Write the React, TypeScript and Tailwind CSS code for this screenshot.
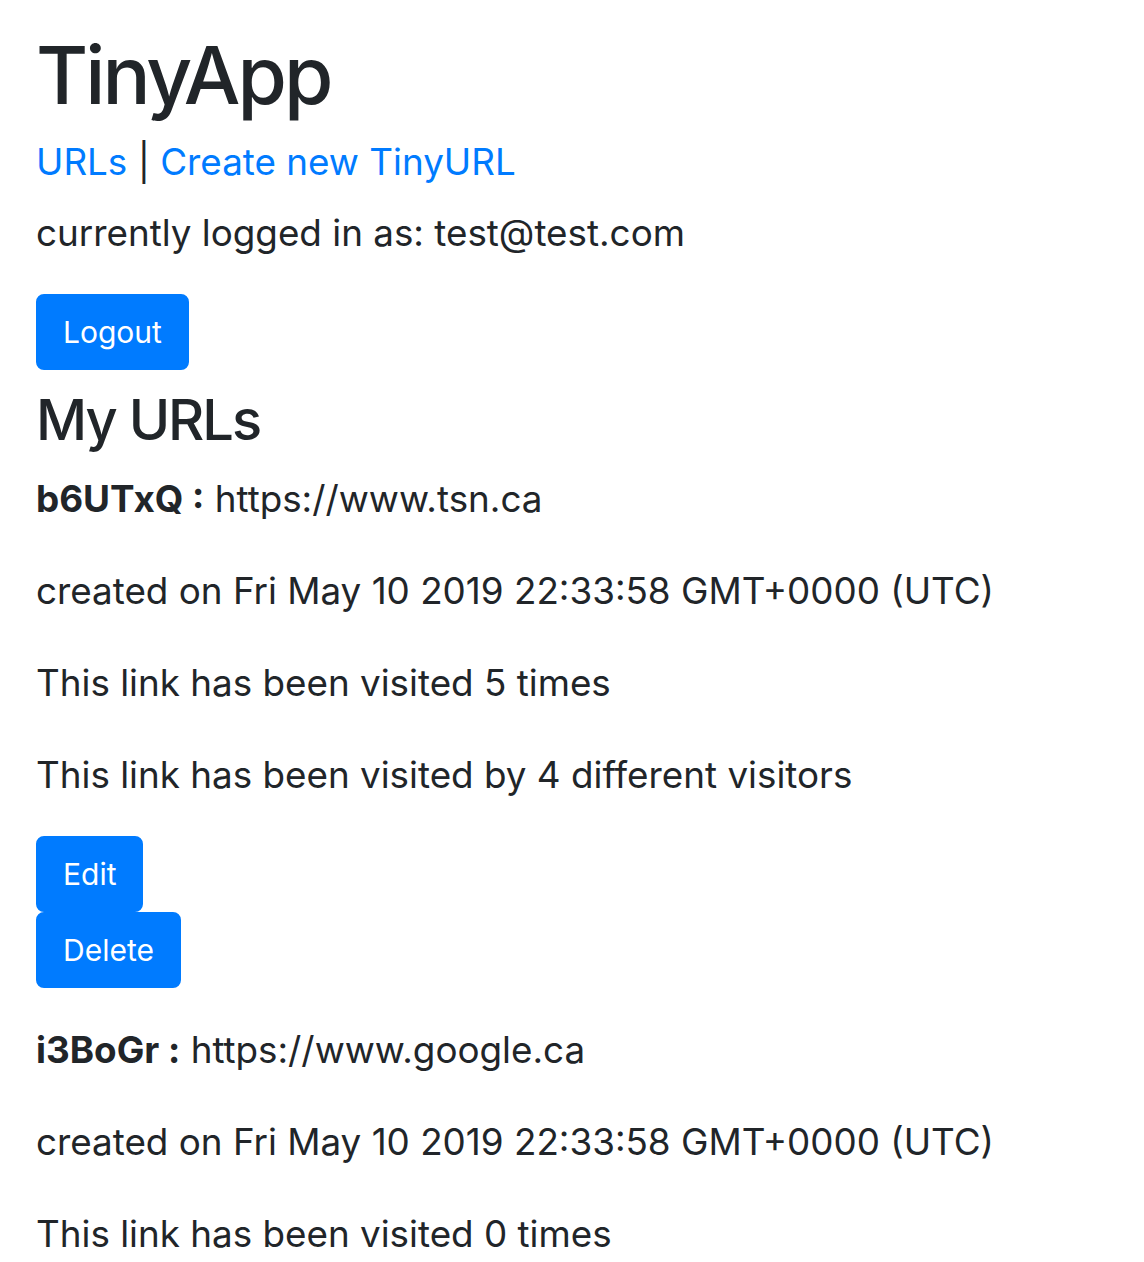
const urls = [
  {
    id: 'b6UTxQ',
    longURL: 'https://www.tsn.ca',
    created: 'Fri May 10 2019 22:33:58 GMT+0000 (UTC)',
    visits: 5,
    visitors: 4,
  },
  {
    id: 'i3BoGr',
    longURL: 'https://www.google.ca',
    created: 'Fri May 10 2019 22:33:58 GMT+0000 (UTC)',
    visits: 0,
    visitors: 0,
  },
];

const Button = ({ children }: { children: string }) => (
  <button className="block bg-[#007bff] border-2 border-[#007bff] text-white rounded-[8px] px-[25px] py-[13.5px] text-[30px] leading-[45px]">
    {children}
  </button>
);

const App = () => {
  return (
    <div className="min-h-screen bg-white text-[#212529] font-['Inter','Liberation_Sans',sans-serif] text-[36.8px] leading-[55px] pl-[36px] pt-[27px]">
      <h1 className="text-[80px] leading-[96px] font-medium tracking-[-3px] mb-[11px]">TinyApp</h1>
      <div className="mb-[16px]">
        <a href="#" className="text-[#007bff]">URLs</a>
        {' | '}
        <a href="#" className="text-[#007bff]">Create new TinyURL</a>
      </div>
      <p className="mb-[34px]">currently logged in as: test@test.com</p>
      <form>
        <Button>Logout</Button>
      </form>
      <h2 className="mt-[17px] text-[56px] leading-[67px] font-medium tracking-[-2px] mb-[17px]">My URLs</h2>
      {urls.map((url, index) => (
        <div key={url.id} className={index > 0 ? 'mt-[34px]' : ''}>
          <p className="mb-[37px]">
            <b className="font-bold">{url.id} :</b> {url.longURL}
          </p>
          <p className="mb-[37px]">created on {url.created}</p>
          <p className="mb-[37px]">This link has been visited {url.visits} times</p>
          <p className="mb-[34px]">This link has been visited by {url.visitors} different visitors</p>
          <Button>Edit</Button>
          <Button>Delete</Button>
        </div>
      ))}
    </div>
  );
};

export default App;
